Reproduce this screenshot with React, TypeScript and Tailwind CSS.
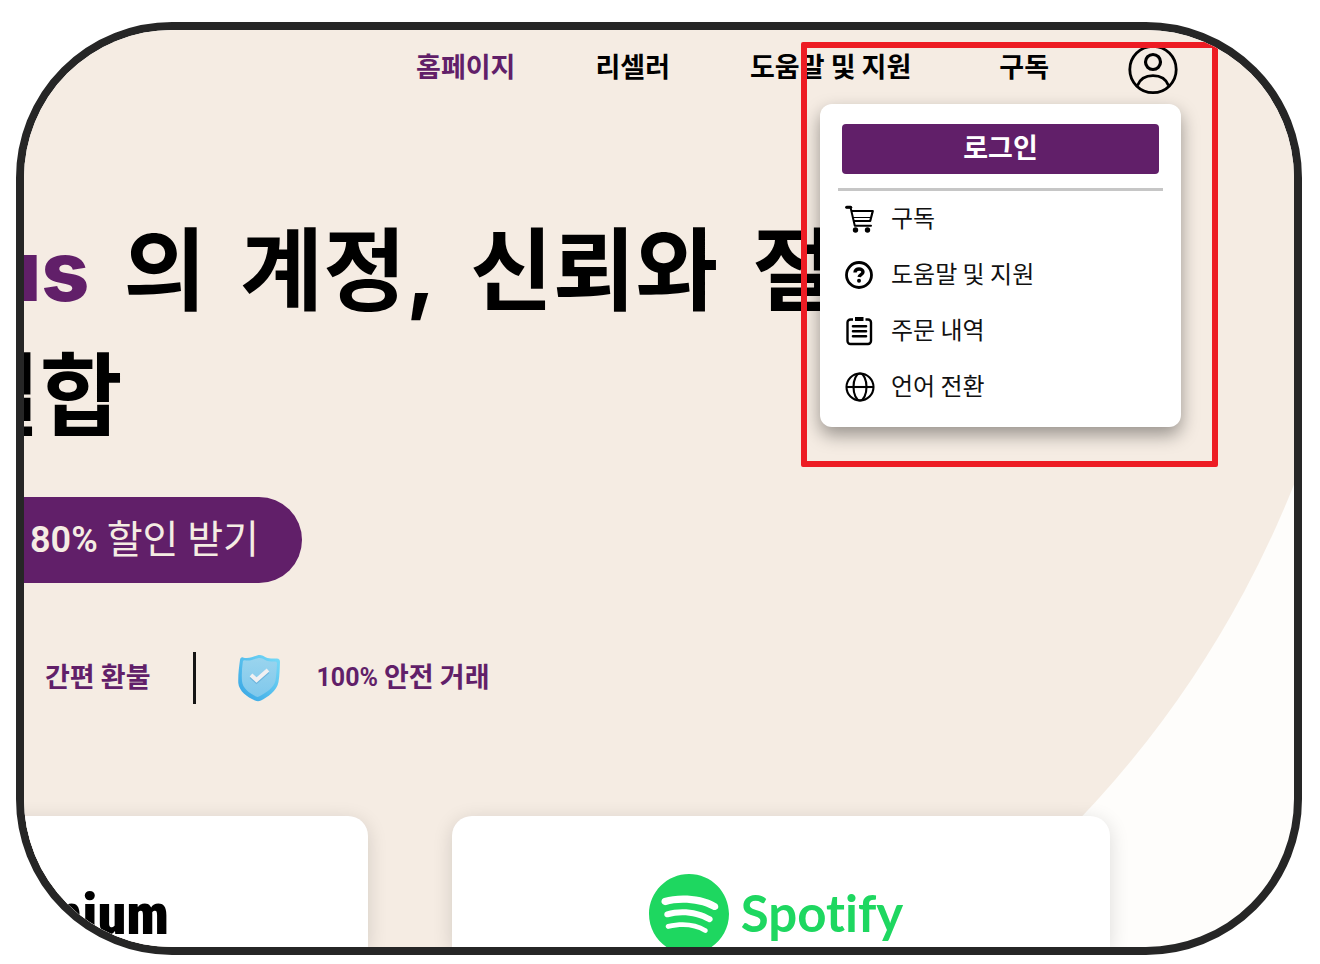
import React from "react";
import { SiSpotify } from "react-icons/si";

const CartIcon: React.FC = () => (
  <svg viewBox="0 0 30 30" className="size-[30px]" fill="none" stroke="black" aria-hidden="true">
    <path d="M1.500 3.200h4l4.300 18.600h16.200" strokeWidth="2" strokeLinecap="round" strokeLinejoin="round" />
    <path d="M1.700 3.200h4" strokeWidth="3" strokeLinecap="round" />
    <path d="M6.500 7h21.300l-2.600 10H9" strokeWidth="2.200" strokeLinejoin="round" />
    <path d="M8 13.500h17.500" strokeWidth="1.200" />
    <circle cx="10.500" cy="26" r="2.700" fill="black" stroke="none" />
    <circle cx="22.500" cy="26" r="2.700" fill="black" stroke="none" />
  </svg>
);

const HelpIcon: React.FC = () => (
  <svg viewBox="0 0 30 30" className="size-[30px]" fill="none" stroke="black" aria-hidden="true">
    <circle cx="14" cy="15" r="12.500" strokeWidth="2.800" />
    <path d="M10 12.500c0-2.300 1.700-3.500 4-3.500s4 1.200 4 3c0 2.600-3.600 2.500-3.900 5" strokeWidth="3.400" />
    <circle cx="14" cy="20.700" r="2" fill="black" stroke="none" />
  </svg>
);

const OrdersIcon: React.FC = () => (
  <svg viewBox="0 0 30 30" className="size-[30px]" fill="none" stroke="black" aria-hidden="true">
    <path d="M8 3.500H5.500a3 3 0 0 0-3 3V25a3 3 0 0 0 3 3H23a3 3 0 0 0 3-3V6.500a3 3 0 0 0-3-3h-2.500" strokeWidth="2.400" />
    <path d="M10 3h8.500" strokeWidth="4" />
    <path d="M8 10.300h13M8 15.300h13M8 20.300h13" strokeWidth="2.600" strokeLinecap="round" />
  </svg>
);

const GlobeIcon: React.FC = () => (
  <svg viewBox="0 0 30 30" className="size-[30px]" fill="none" stroke="black" strokeWidth="2.100" aria-hidden="true">
    <circle cx="15" cy="15" r="13.500" />
    <ellipse cx="15" cy="15" rx="6.500" ry="13.500" />
    <path d="M1.500 15h27" />
  </svg>
);

const AccountIcon: React.FC = () => (
  <svg viewBox="0 0 50 50" className="size-[50px]" fill="none" stroke="black" strokeWidth="2.800" aria-hidden="true">
    <circle cx="25" cy="24.500" r="23.200" />
    <circle cx="25" cy="17" r="7.500" strokeWidth="3.200" />
    <path d="M9.500 40.500C12 34 18 30.700 25 30.700S38 34 40.500 40.500" />
  </svg>
);

const ShieldIcon: React.FC = () => (
  <svg viewBox="0 0 44 48" className="h-12 w-11" aria-hidden="true">
    <defs>
      <linearGradient id="shieldEdge" x1="1" y1="0" x2="0" y2="1">
        <stop offset="0" stopColor="#79dcf8" />
        <stop offset="1" stopColor="#35a3e3" />
      </linearGradient>
      <linearGradient id="shieldFace" x1="0" y1="0" x2="0" y2="1">
        <stop offset="0" stopColor="#9ad4ee" />
        <stop offset="1" stopColor="#7fc8ec" />
      </linearGradient>
    </defs>
    <path
      d="M23 1c3 0 6 3.500 11 3.500h6c2 0 3 1.500 3 3.500-.3 7-.3 13-1.500 20C40 37 30 43.500 24 46.500c-2 1-4 1-6 0C10 43 2 37 1.300 29 1 21 2 13 3 6c.3-2 1.500-3 3-2.500 7 2 12-2.500 17-2.500z"
      fill="url(#shieldEdge)"
    />
    <path
      d="M23 4c3 0 6 3.500 11 3.500h4.500c1 0 1.500 1 1.500 2-.3 6-.5 11-1.500 17C37 34 28 39.500 22 42.500c-1 .5-2 .5-3 0C12 39 5.500 34 5 27c-.5-7 0-13 .8-19 .2-1.500 1-2 2-1.800C14 7.500 18 4 23 4z"
      fill="url(#shieldFace)"
    />
    <path d="M14 22.500l5.500 5L31 17.500" fill="none" stroke="#6db5dd" strokeWidth="4" />
    <path d="M14 21l5.500 5L31 16" fill="none" stroke="#f1f0f2" strokeWidth="4" />
  </svg>
);

const menuItems = [
  { label: "구독", icon: <CartIcon /> },
  { label: "도움말 및 지원", icon: <HelpIcon /> },
  { label: "주문 내역", icon: <OrdersIcon /> },
  { label: "언어 전환", icon: <GlobeIcon /> },
];

const AccountMenu: React.FC = () => (
  <div className="absolute top-full right-[-3px] mt-[9px] w-[361px] rounded-xl bg-white px-[18px] pt-5 pb-3 shadow-[0_8px_18px_rgba(0,0,0,0.38)]">
    <div className="px-1">
      <button type="button" className="flex h-[50px] w-full items-center justify-center rounded bg-[#611f69] pb-1 text-[27px] font-bold text-white">
        로그인
      </button>
    </div>
    <hr className="mt-[14px] border-t-[3px] border-[#c6c6c6]" />
    <ul>
      {menuItems.map((item) => (
        <li key={item.label}>
          <a href="#" className="flex h-14 items-center gap-4 pl-[7px] text-2xl text-[#111]">
            {item.icon}
            <span className="pb-1">{item.label}</span>
          </a>
        </li>
      ))}
    </ul>
  </div>
);

const Header: React.FC = () => (
  <header className="relative z-10 flex justify-end pt-[15px] pr-[116px]">
    <nav className="mr-[79px] flex items-center gap-20 pb-2 text-[27px] leading-10 font-bold whitespace-nowrap text-black">
      <a href="#" className="text-[#611f69]">홈페이지</a>
      <a href="#">리셀러</a>
      <a href="#" className="mr-2">도움말 및 지원</a>
      <a href="#">구독</a>
    </nav>
    <div className="relative">
      <button type="button" aria-label="계정" className="block">
        <AccountIcon />
      </button>
      <AccountMenu />
      {/* Highlight around the account menu */}
      <div className="pointer-events-none absolute top-[-3px] right-[-40px] h-[425px] w-[417px] rounded-xs border-6 border-[#ed1c24]" />
    </div>
  </header>
);

const Hero: React.FC = () => (
  <section className="relative">
    <h1 className="mt-[113px] font-['Inter','Noto_Sans_CJK_KR',sans-serif] text-[90px] leading-[125px] font-bold whitespace-nowrap text-black">
      <span className="ml-[-36px] flex h-[125px] gap-[34px]">
        <span className="text-[84px] font-extrabold text-[#611f69]">us</span>
        <span>의</span>
        <span>계정,</span>
        <span>신뢰와</span>
        <span>절</span>
      </span>
      <span className="ml-[-67px] block">결합</span>
    </h1>
    <button type="button" className="mt-[39px] ml-[-60px] flex h-[86px] items-center gap-[9px] rounded-r-full bg-[#611f69] pr-[43px] pl-[66px] text-[#f5ece3]">
      <span className="font-['Roboto'] text-4xl font-semibold">80%</span>
      <span className="pb-2 text-[39px]">할인 받기</span>
    </button>
    <div className="mt-[69px] flex h-[52px] items-center pl-[21px] text-[27px] font-bold text-[#611f69]">
      <span className="pb-1">간편 환불</span>
      <span className="ml-[42px] h-full w-[3px] bg-[#151515]" />
      <span className="ml-[41px]"><ShieldIcon /></span>
      <span className="ml-9 flex items-center gap-[6px]">
        <span className="font-['Roboto'] text-[25px]">100%</span>
        <span className="pb-1">안전 거래</span>
      </span>
    </div>
  </section>
);

const ProductCards: React.FC = () => (
  <section className="relative mt-28 mr-[184px] ml-[-314px] grid grid-cols-2 gap-[84px]">
    <article className="flex h-[131px] justify-end rounded-t-[20px] bg-white pt-[60px] pr-[199px] shadow-[0_4px_20px_rgba(0,0,0,0.14)]">
      <span className="font-['Roboto_Condensed','Liberation_Sans_Narrow','Liberation_Sans'] text-[58px] leading-[76px] font-black text-black">
        mium
      </span>
    </article>
    <article className="flex h-[131px] justify-center gap-3 rounded-t-[20px] bg-white pt-[58px] pr-[10px] text-[#1ed760] shadow-[0_4px_20px_rgba(0,0,0,0.14)]">
      <SiSpotify className="size-20" aria-hidden="true" />
      <span className="font-['Lato'] text-[51px] leading-[78px] font-bold [font-variant-ligatures:none]">Spotify</span>
    </article>
  </section>
);

const App: React.FC = () => {
  return (
    <div className="bg-white pt-[22px] pr-[18px] pb-[9px] pl-4 font-['Noto_Sans_CJK_KR',sans-serif]">
      <main className="relative overflow-hidden rounded-[156px] border-8 border-[#262626] bg-[#fefdfb]">
        <div className="absolute top-[-966px] right-[-73px] size-[2076px] rounded-full bg-[#f5ece3]" />
        <Header />
        <Hero />
        <ProductCards />
      </main>
    </div>
  );
};

export default App;
